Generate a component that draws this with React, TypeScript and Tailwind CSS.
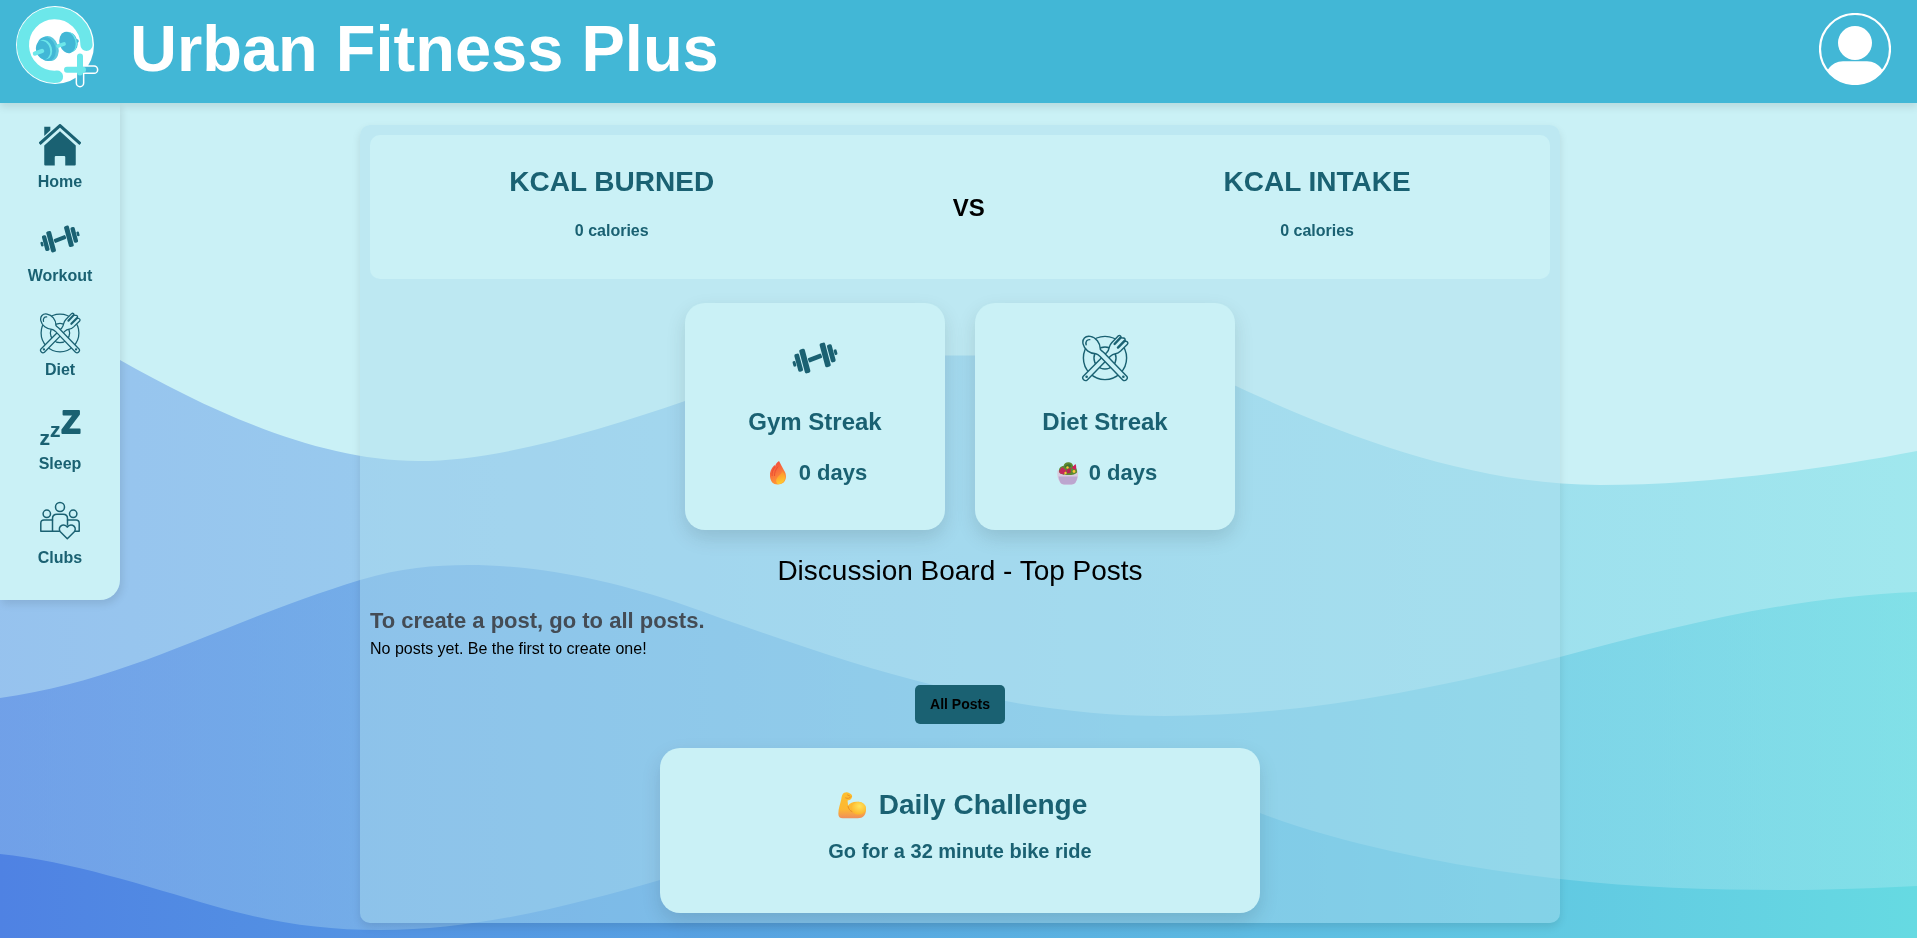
import type { ReactNode } from 'react';

type IconProps = { className?: string };

function WaveBackground() {
  return (
    <svg
      className="fixed inset-0 -z-10 h-full w-full"
      viewBox="0 0 1917 938"
      preserveAspectRatio="xMidYMax slice"
      aria-hidden="true"
    >
      <defs>
        <linearGradient id="wave" x1="0" y1="0" x2="1917" y2="0" gradientUnits="userSpaceOnUse">
          <stop offset="0" stopColor="#4f82e3" />
          <stop offset="1" stopColor="#66dae2" />
        </linearGradient>
      </defs>
      <rect width="1917" height="938" fill="#caf1f6" />
      <path
        fill="url(#wave)"
        fillOpacity="0.42"
        d="M0 300C50 320 80 338 120 360C210 411 318 461 418 461C500 461 600 430 685 401L820 355.5H1160L1236 386C1320 425 1460 485 1600 485C1700 485 1820 470 1917 451V938H0Z"
      />
      <path
        fill="url(#wave)"
        fillOpacity="0.53"
        d="M0 698C130 680 215 625 360 580C400 568 435 565 468 565C545 565 620 583 684 605C760 632 850 665 937 686C1010 705 1090 716 1165 716C1300 716 1430 690 1560 657C1680 625 1790 597 1917 592V938H0Z"
      />
      <path
        fill="url(#wave)"
        d="M0 854C70 861 145 886 214 906C270 922 320 930 380 930C480 930 580 903 660 880C860 800 1060 750 1260 813C1345 845 1450 866 1560 879C1640 888 1710 890 1783 890C1830 890 1875 888 1917 886V938H0Z"
      />
    </svg>
  );
}

function Logo({ className }: IconProps) {
  return (
    <svg className={className} viewBox="0 1 84 84" fill="none" aria-hidden="true">
      <circle cx="40" cy="40" r="39" fill="#fff" />
      <path d="M71.500 40A31.800 31.800 0 1 0 42 71.700" stroke="#6ce7ea" strokeWidth="12.200" strokeLinecap="round" />
      <ellipse cx="34" cy="43.500" rx="9.500" ry="12.800" transform="rotate(-16 34 43.500)" fill="#5cc9de" />
      <ellipse cx="31.500" cy="44" rx="9.200" ry="12.300" transform="rotate(-16 31.500 44)" fill="#42b7d6" />
      <ellipse cx="29.500" cy="44.500" rx="7.500" ry="10" transform="rotate(-16 29.500 44.500)" fill="#6ce7ea" />
      <ellipse cx="28" cy="45" rx="7" ry="9.500" transform="rotate(-16 28 45)" fill="#42b7d6" />
      <path d="M20 48.500L27 46" stroke="#6ce7ea" strokeWidth="4.500" strokeLinecap="round" />
      <path d="M59 37L62 36" stroke="#42b7d6" strokeWidth="3.600" strokeLinecap="round" />
      <ellipse cx="55" cy="37" rx="7.500" ry="10" transform="rotate(-16 55 37)" fill="#42b7d6" />
      <ellipse cx="54" cy="37.200" rx="7.800" ry="10.500" transform="rotate(-16 54 37.200)" fill="#6ce7ea" />
      <ellipse cx="52.500" cy="37.500" rx="8" ry="10.800" transform="rotate(-16 52.500 37.500)" fill="#42b7d6" />
      <path d="M43 41L49 39" stroke="#6ce7ea" strokeWidth="3.800" strokeLinecap="round" />
      <path d="M65 51.500V78M52 64.700H79" stroke="#fff" strokeWidth="8.800" strokeLinecap="round" />
      <path d="M65 64V78M65 64.700H79" stroke="#42b7d6" strokeWidth="5.800" strokeLinecap="round" />
      <path d="M65 51.500V67.500M52 64.700H68" stroke="#6ce7ea" strokeWidth="6" strokeLinecap="round" />
    </svg>
  );
}

function ProfileIcon({ className }: IconProps) {
  return (
    <svg className={className} viewBox="0 0 72 72" aria-hidden="true">
      <defs>
        <clipPath id="profile-ring">
          <circle cx="36" cy="36" r="35.500" />
        </clipPath>
      </defs>
      <circle cx="36" cy="36" r="35" fill="none" stroke="#fff" strokeWidth="2.200" />
      <circle cx="36" cy="30" r="17" fill="#fff" />
      <path
        clipPath="url(#profile-ring)"
        fill="#fff"
        d="M0 72L9 56.500C13 51 18 48.300 24 48.300H48C54 48.300 59 51 63 56.500L72 72Z"
      />
    </svg>
  );
}

function HomeIcon({ className }: IconProps) {
  return (
    <svg className={className} viewBox="0 0 40 40" fill="currentColor" aria-hidden="true">
      <path d="M5 2.500H10.800V6L5 11.500Z" />
      <path d="M0.500 19L20 1.500L39.500 19" fill="none" stroke="currentColor" strokeWidth="3" strokeLinejoin="round" />
      <path d="M20 7L35 20.500V38.500Q35 39.500 34 39.500H25V31.500Q25 30.500 24 30.500H16Q15 30.500 15 31.500V39.500H6Q5 39.500 5 38.500V20.500Z" />
    </svg>
  );
}

function DumbbellIcon({ className }: IconProps) {
  return (
    <svg className={className} viewBox="0 0 42 42" fill="currentColor" aria-hidden="true">
      <g transform="translate(1 1) rotate(-15 20 20)">
        <rect x="13.800" y="18" width="12.400" height="4" rx="1" transform="rotate(-7 20 20)" />
        <rect x="8.200" y="9.500" width="5" height="21.600" rx="1.500" />
        <rect x="3" y="12.300" width="4.300" height="16" rx="1.500" />
        <rect x="0" y="17.900" width="2.600" height="4.800" rx="1" />
        <rect x="26.800" y="8.900" width="5" height="21.600" rx="1.500" />
        <rect x="32.700" y="11.700" width="4.300" height="16" rx="1.500" />
        <rect x="37.400" y="17.300" width="2.600" height="4.800" rx="1" />
      </g>
    </svg>
  );
}

function DietIcon({ className }: IconProps) {
  return (
    <svg
      className={className}
      viewBox="0 0 40 40"
      fill="none"
      stroke="currentColor"
      strokeWidth="1.200"
      strokeLinejoin="round"
      strokeLinecap="round"
      aria-hidden="true"
    >
      <circle cx="20" cy="20" r="18" />
      <circle cx="20" cy="20" r="9.200" />
      <g fill="#caf1f6">
        <path d="M1.900 35.200L21.500 15.500C23 13.800 23.300 12.500 23.600 10.900C23.900 9.300 24.500 8.300 25.600 7.200L31 1.600C32.300 0.600 33.700 1.700 33 3L35 3.300C36.600 3.100 37.200 4.600 36.300 5.800L38 6.200C39.200 6.600 39.400 7.900 38.500 8.800L33 14.200C31.800 15.300 30.600 16.100 28.800 16.400C27 16.700 26 17 24.500 18.500L5.200 38.300C3.200 39.900 0.300 37.200 1.900 35.200Z" />
        <path d="M38.100 35.200L19 15.500C18 14.500 16.800 14 16.100 12.800C16.200 7.500 12.300 2.700 7.700 2C3.500 1.300 0.900 4.200 1.700 8.300C2.600 12.700 7.300 16.400 12.300 16.500C14 17 14.700 17.600 15.700 18.500L34.800 38.300C36.800 39.900 39.700 37.200 38.100 35.200Z" />
      </g>
      <path d="M33 3L28 8.300M36.300 5.800L30.800 11.300" strokeWidth="2" />
      <path d="M4.300 9C3.600 6.300 5 4.500 7.300 4.700" />
      <circle cx="4.700" cy="35.600" r="0.500" />
      <circle cx="35.300" cy="35.600" r="0.500" />
    </svg>
  );
}

function SleepIcon({ className }: IconProps) {
  return (
    <svg
      className={`overflow-visible ${className ?? ''}`}
      viewBox="0 0 42 42"
      fill="currentColor"
      stroke="currentColor"
      strokeLinejoin="round"
      fontFamily="'Liberation Sans', Arial, sans-serif"
      fontWeight="700"
      aria-hidden="true"
    >
      <text x="0.500" y="39" fontSize="21" strokeWidth="0.200">z</text>
      <text x="11" y="30.500" fontSize="21" strokeWidth="0.200">z</text>
      <text x="22.500" y="26.500" fontSize="31" strokeWidth="2">Z</text>
    </svg>
  );
}

function ClubsIcon({ className }: IconProps) {
  return (
    <svg
      className={className}
      viewBox="0 0 42 42"
      fill="none"
      stroke="currentColor"
      strokeWidth="1.500"
      strokeLinejoin="round"
      strokeLinecap="round"
      aria-hidden="true"
    >
      <g transform="translate(1 1)">
        <circle cx="20" cy="6" r="4.500" />
        <circle cx="6.800" cy="12.800" r="3.700" />
        <circle cx="33.200" cy="12.800" r="3.700" />
        <path d="M12.500 30V17.500Q12.500 13.200 17 13.200H23Q27.500 13.200 27.500 17.500V24" />
        <path d="M12.500 19H4Q0.800 19 0.800 22.300V30.200H19.800" />
        <path d="M27.500 19H36Q39.200 19 39.200 22.300V30.200H35" />
        <path
          fill="#caf1f6"
          d="M27.300 37.800L20.300 30.800C18.500 28.500 19.300 25.200 22 24.200C24.200 23.500 26.200 24.300 27.300 26.200C28.400 24.300 30.400 23.500 32.600 24.200C35.300 25.200 36.100 28.500 34.300 30.800Z"
        />
      </g>
    </svg>
  );
}

function FlameEmoji() {
  return (
    <svg className="h-[24px] w-[30px]" viewBox="0 0 30 24" role="img" aria-label="Fire">
      <defs>
        <linearGradient id="flame" x1="0" y1="0" x2="0.400" y2="1">
          <stop offset="0" stopColor="#f0403c" />
          <stop offset="0.550" stopColor="#f9713c" />
          <stop offset="1" stopColor="#ff9a35" />
        </linearGradient>
        <linearGradient id="flame-core" x1="0.300" y1="0" x2="0.500" y2="1">
          <stop offset="0" stopColor="#fd8a30" />
          <stop offset="1" stopColor="#ffce2e" />
        </linearGradient>
      </defs>
      <path fill="url(#flame)" d="M16 0C13 2 12.300 4 12.200 5.200L11.500 4C8 7.500 6.500 11 7 15.500C7.500 20.500 10 23.500 14.500 23.500C19.500 23.500 23 20.500 23 15.500C23 11.500 21.500 10.500 20 7.500C18.800 5 17.500 3 16 0Z" />
      <path fill="url(#flame-core)" d="M19 10C19 13 16 14 14 17C12.500 19.500 13 22 15 23.200C19 23.200 22 20.500 22 16C22 13.500 20.500 11.500 19 10Z" />
      <path stroke="#e8472f" strokeWidth="0.800" fill="none" d="M12 6C9.500 9 8.700 12 9.200 15M15 5.500C12.500 9 11.300 12 11.500 15" />
    </svg>
  );
}

function SaladEmoji() {
  return (
    <svg className="h-[24px] w-[30px]" viewBox="0 0 30 24" role="img" aria-label="Salad">
      <path fill="#d9cbe0" d="M4.500 9.500H25C25.500 14 25 17.500 23 20.500Q21.500 23.500 18.500 23.500H11Q8 23.500 6.500 20.500C4.500 17.500 4 14 4.500 9.500Z" />
      <path fill="#bca6cf" d="M5.500 15.500H24.500Q23.500 23.500 18.500 23.500H11Q6.500 23.500 5.500 15.500Z" />
      <path fill="#5d8a32" d="M6 11C5.500 7 8 5 10.500 5C11 2 14 0.500 17 1.500C19 2 20 4 20 5C23 5.500 24.500 8.500 24 11.500C22 15 8 15 6 11Z" />
      <path fill="#c4285c" d="M6 10L9 6L13.500 9.500L11 13.500L7 12.500Z" />
      <path fill="#cf1f5b" d="M18.500 7L22.500 3C23.500 5.500 23.500 7.500 22.500 9Z" />
      <path fill="#b52454" d="M14 8L18 7L17.500 12L13.500 12.500Z" />
      <path fill="#3f7030" d="M11.500 6C12.500 3 17 2 18.500 5L15 7.500Z" />
      <circle cx="14.500" cy="6.500" r="1.200" fill="#f9c834" />
      <circle cx="12.500" cy="12" r="1.200" fill="#f9c834" />
      <circle cx="21" cy="10.500" r="1.400" fill="#f9c834" />
    </svg>
  );
}

function BicepsEmoji() {
  return (
    <svg className="h-[32px] w-[38px]" viewBox="0 0 38 32" role="img" aria-label="Flexed biceps">
      <defs>
        <linearGradient id="arm" x1="0" y1="0" x2="0" y2="1">
          <stop offset="0" stopColor="#fdbf2f" />
          <stop offset="0.650" stopColor="#fdb833" />
          <stop offset="1" stopColor="#ef8d5c" />
        </linearGradient>
        <radialGradient id="muscle" cx="0.550" cy="0.350" r="0.600">
          <stop offset="0" stopColor="#ffe35c" />
          <stop offset="1" stopColor="#fdb92e" />
        </radialGradient>
      </defs>
      <g transform="translate(0.500 3) scale(0.970 0.850)">
        <path fill="url(#arm)" d="M11 1C13 -0.300 15 0.200 16.500 1.500C19 2.500 20 5 18.500 7.500C17.500 9.500 15.500 9.500 14.500 10L15 16C17 12.500 21 11 25 11.500C30 12 33.500 16 33.500 21C33.500 27 30.500 31 25 31H9.500C6.500 31 5 29 5 25.500C5 19 7 14 8 8.500C8.500 5 9 2.500 11 1Z" />
        <circle cx="26" cy="19" r="7.500" fill="url(#muscle)" />
        <path fill="none" stroke="#e88a23" strokeWidth="1" strokeLinecap="round" d="M12.500 7C14.500 8 17 7.500 18 5.500M14.500 3.500L16.500 4.500M15 17C15.500 20 17 22 19 23" />
      </g>
    </svg>
  );
}

const navItems = [
  { label: 'Home', Icon: HomeIcon },
  { label: 'Workout', Icon: DumbbellIcon },
  { label: 'Diet', Icon: DietIcon },
  { label: 'Sleep', Icon: SleepIcon },
  { label: 'Clubs', Icon: ClubsIcon },
];

function Sidebar() {
  return (
    <nav
      aria-label="Main"
      className="w-[120px] shrink-0 self-start rounded-br-[20px] bg-[#caf1f6] pt-[21px] pb-8 shadow-[2px_4px_8px_rgba(0,0,0,0.1)]"
    >
      <ul className="flex flex-col gap-[26px]">
        {navItems.map(({ label, Icon }) => (
          <li key={label}>
            <a href="#" className="flex flex-col items-center gap-1.5 text-base leading-5 font-bold">
              <Icon className="size-[42px]" />
              {label}
            </a>
          </li>
        ))}
      </ul>
    </nav>
  );
}

function KcalColumn({ title, value }: { title: string; value: string }) {
  return (
    <div className="flex flex-col items-center gap-[19px] pb-1">
      <h2 className="text-[28px] leading-8 font-bold">{title}</h2>
      <p className="text-base leading-7 font-bold">{value}</p>
    </div>
  );
}

type StreakProps = { icon: ReactNode; title: string; emoji: ReactNode; days: string };

function StreakCard({ icon, title, emoji, days }: StreakProps) {
  return (
    <article className="flex w-[260px] flex-col items-center rounded-[20px] bg-[#caf1f6] pt-[31px] pb-[41px] shadow-[0_8px_20px_rgba(0,0,0,0.12)]">
      {icon}
      <h3 className="mt-6 text-2xl leading-8 font-bold">{title}</h3>
      <p className="mt-[19px] flex items-center gap-1.5 text-[22px] leading-8 font-bold">
        {emoji}
        {days}
      </p>
    </article>
  );
}

export default function App() {
  return (
    <div className="relative isolate flex min-h-screen flex-col font-['Liberation_Sans',Arial,sans-serif] text-[#1a6172]">
      <WaveBackground />
      <header className="relative z-10 flex h-[103px] items-center justify-between bg-[#42b7d6] pr-[26px] pl-[15px] shadow-[0_4px_8px_rgba(0,0,0,0.1)]">
        <div className="flex items-center gap-[31px] pb-[7px]">
          <Logo className="size-[84px]" />
          <h1 className="pt-0.5 text-[65px] leading-[72px] font-bold text-white">Urban Fitness Plus</h1>
        </div>
        <button type="button" aria-label="Profile" className="mb-[5px]">
          <ProfileIcon className="size-[72px]" />
        </button>
      </header>

      <div className="flex flex-1">
        <Sidebar />
        <main className="flex-1 pt-[22px] pr-[117px] pb-[15px]">
          <div className="mx-auto flex max-w-[1200px] flex-col rounded-[10px] bg-[#addeed]/45 p-2.5 shadow-[0_4px_8px_rgba(0,0,0,0.1)]">
            <section className="flex items-center justify-around rounded-[10px] bg-[#caf1f6] px-5 pt-[31px] pb-[30px]">
              <KcalColumn title="KCAL BURNED" value="0 calories" />
              <span className="text-2xl leading-8 font-bold text-black">VS</span>
              <KcalColumn title="KCAL INTAKE" value="0 calories" />
            </section>

            <section className="mt-6 flex justify-center gap-[30px]">
              <StreakCard
                icon={<DumbbellIcon className="size-12" />}
                title="Gym Streak"
                emoji={<FlameEmoji />}
                days="0 days"
              />
              <StreakCard
                icon={<DietIcon className="size-12" />}
                title="Diet Streak"
                emoji={<SaladEmoji />}
                days="0 days"
              />
            </section>

            <section className="mt-[25px] flex flex-col text-black">
              <h2 className="text-center text-[28px] leading-8">Discussion Board - Top Posts</h2>
              <p className="mt-5 text-[22px] leading-7 font-bold text-[#444c55]">
                To create a post, go to all posts.
              </p>
              <p className="text-base leading-7">No posts yet. Be the first to create one!</p>
              <button
                type="button"
                className="mt-[22px] self-center rounded-[5px] bg-[#1a6172] px-[15px] py-2.5 text-sm leading-[19px] font-bold"
              >
                All Posts
              </button>
            </section>

            <section className="mt-6 flex w-[600px] flex-col items-center gap-4 self-center rounded-[20px] bg-[#caf1f6] pt-[41px] pb-12 shadow-[0_8px_20px_rgba(0,0,0,0.12)]">
              <h2 className="flex items-center gap-2 text-[28px] leading-8 font-bold">
                <BicepsEmoji />
                Daily Challenge
              </h2>
              <p className="text-xl leading-7 font-bold">Go for a 32 minute bike ride</p>
            </section>
          </div>
        </main>
      </div>
    </div>
  );
}
